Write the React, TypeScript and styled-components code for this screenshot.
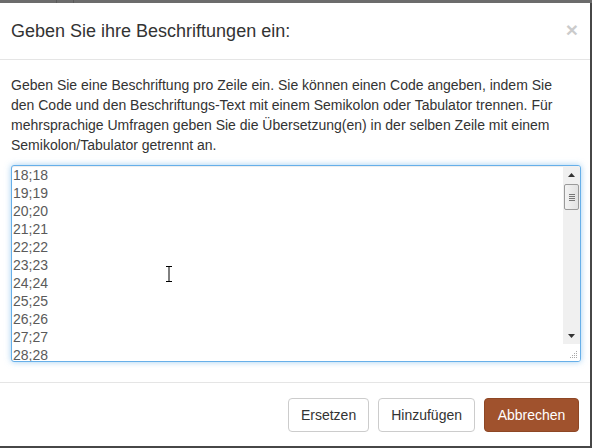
import { useEffect, useRef } from 'react';
import styled, { createGlobalStyle } from 'styled-components';

const GlobalStyle = createGlobalStyle`
  html, body {
    margin: 0;
    padding: 0;
    background: #474747;
  }
  body {
    font-family: 'Liberation Sans', Arial, sans-serif;
    font-size: 14px;
    color: #333;
    overflow: hidden;
  }
  * { box-sizing: border-box; }
`;

const Page = styled.div`
  width: 592px;
  height: 448px;
  display: flex;
  flex-direction: column;
  align-items: flex-start;
`;

const TabStrip = styled.div`
  width: 100%;
  height: 3px;
  display: flex;
  background: #6c6c6c;
  flex-shrink: 0;
`;

const TabSegment = styled.div<{ $w: number }>`
  width: ${(p) => p.$w}px;
  border-right: 1px solid #5a5a5a;
`;

const Modal = styled.div`
  width: 590px;
  height: 443px;
  background: #fff;
  display: flex;
  flex-direction: column;
`;

const Header = styled.div`
  display: flex;
  align-items: center;
  justify-content: space-between;
  padding: 15px 12px 15px 11px;
  border-bottom: 1px solid #e5e5e5;
`;

const Title = styled.h4`
  margin: 0;
  font-size: 18px;
  font-weight: normal;
  line-height: 26px;
  color: #333;
`;

const Close = styled.button`
  border: 0;
  background: transparent;
  padding: 0;
  font-family: 'Liberation Sans', Arial, sans-serif;
  font-size: 21px;
  font-weight: bold;
  line-height: 1;
  color: #000;
  opacity: 0.2;
  margin-top: -4px;
  cursor: pointer;
`;

const Body = styled.div`
  padding: 15px 9px 19px 11px;
`;

const Hint = styled.p`
  margin: 0 0 10px;
  max-width: 566px;
  line-height: 20px;
  color: #333;
`;

const TextBox = styled.div`
  position: relative;
  height: 197px;
  display: flex;
  border: 1px solid #66afe9;
  border-radius: 3px;
  box-shadow: inset 0 1px 1px rgba(0, 0, 0, 0.075), 0 0 6px rgba(102, 175, 233, 0.6);
  background: #fff;
  overflow: hidden;
`;

const Lines = styled.textarea`
  flex: 1;
  border: 0;
  outline: none;
  resize: none;
  overflow: hidden;
  padding: 0 1px;
  margin: 0;
  font-family: 'Liberation Sans', Arial, sans-serif;
  font-size: 14px;
  line-height: 18px;
  color: #5a5a5a;
  background: transparent;
  caret-color: #333;
`;

const ScrollColumn = styled.div`
  width: 17px;
  display: flex;
  flex-direction: column;
  flex-shrink: 0;
`;

const Track = styled.div`
  flex: 1;
  display: flex;
  flex-direction: column;
  align-items: center;
  background: #f0f0f0;
`;

const Arrow = styled.div`
  height: 17px;
  width: 17px;
  display: flex;
  align-items: center;
  justify-content: center;
`;

const Thumb = styled.div`
  width: 15px;
  height: 26px;
  margin-top: 1px;
  border: 1px solid #9a9a9a;
  border-radius: 2px;
  background: linear-gradient(to right, #f3f3f3, #e2e2e2);
  display: flex;
  flex-direction: column;
  align-items: center;
  justify-content: center;
  gap: 1px;
`;

const Grip = styled.span`
  display: block;
  width: 6px;
  height: 1px;
  background: #777;
`;

const Spacer = styled.div`
  flex: 1;
`;

const Corner = styled.div`
  height: 17px;
  background: #fff;
  display: flex;
  align-items: flex-end;
  justify-content: flex-end;
  padding: 0 2px 2px 0;
`;

const Cursor = styled.svg`
  position: absolute;
  left: 153px;
  top: 100px;
  pointer-events: none;
`;

const Footer = styled.div`
  margin-top: auto;
  display: flex;
  justify-content: flex-end;
  gap: 9px;
  padding: 15px 11px 14px;
  border-top: 1px solid #e5e5e5;
`;

const Button = styled.button<{ $primary?: boolean }>`
  height: 34px;
  padding: 6px 12px;
  font-family: 'Liberation Sans', Arial, sans-serif;
  font-size: 14px;
  line-height: 20px;
  border-radius: 4px;
  border: 1px solid ${(p) => (p.$primary ? '#8e4725' : '#ccc')};
  background: ${(p) => (p.$primary ? '#a0522d' : '#fff')};
  color: ${(p) => (p.$primary ? '#fff' : '#333')};
  min-width: ${(p) => (p.$primary ? 95 : 0)}px;
  cursor: pointer;
`;

const entries = Array.from({ length: 60 }, (_, i) => `${i + 1};${i + 1}`).join('\n');

const App = () => {
  const area = useRef<HTMLTextAreaElement>(null);

  useEffect(() => {
    if (area.current) area.current.scrollTop = 17 * 18;
  }, []);

  return (
    <>
      <GlobalStyle />
      <Page>
        <TabStrip>
          <TabSegment $w={57} />
          <TabSegment $w={17} />
        </TabStrip>
        <Modal>
          <Header>
            <Title>Geben Sie ihre Beschriftungen ein:</Title>
            <Close>×</Close>
          </Header>
          <Body>
            <Hint>
              Geben Sie eine Beschriftung pro Zeile ein. Sie können einen Code angeben, indem Sie
              den Code und den Beschriftungs-Text mit einem Semikolon oder Tabulator trennen. Für
              mehrsprachige Umfragen geben Sie die Übersetzung(en) in der selben Zeile mit einem
              Semikolon/Tabulator getrennt an.
            </Hint>
            <TextBox>
              <Lines ref={area} defaultValue={entries} spellCheck={false} />
              <ScrollColumn>
                <Track>
                  <Arrow>
                    <svg width="7" height="4" viewBox="0 0 7 4">
                      <path d="M0 4 L3.5 0 L7 4 Z" fill="#333" />
                    </svg>
                  </Arrow>
                  <Thumb>
                    <Grip />
                    <Grip />
                    <Grip />
                    <Grip />
                  </Thumb>
                  <Spacer />
                  <Arrow>
                    <svg width="7" height="4" viewBox="0 0 7 4">
                      <path d="M0 0 L7 0 L3.5 4 Z" fill="#333" />
                    </svg>
                  </Arrow>
                </Track>
                <Corner>
                  <svg width="8" height="8" viewBox="0 0 8 8">
                    <g fill="#a8a8a8">
                      <rect x="6" y="0" width="1" height="1" />
                      <rect x="4" y="2" width="1" height="1" />
                      <rect x="6" y="2" width="1" height="1" />
                      <rect x="2" y="4" width="1" height="1" />
                      <rect x="4" y="4" width="1" height="1" />
                      <rect x="6" y="4" width="1" height="1" />
                      <rect x="0" y="6" width="1" height="1" />
                      <rect x="2" y="6" width="1" height="1" />
                      <rect x="4" y="6" width="1" height="1" />
                      <rect x="6" y="6" width="1" height="1" />
                    </g>
                  </svg>
                </Corner>
              </ScrollColumn>
              <Cursor width="8" height="16" viewBox="0 0 8 16">
                <path d="M1 0.5 H7 M4 0.5 V15.5 M1 15.5 H7" stroke="#000" strokeWidth="1" fill="none" />
              </Cursor>
            </TextBox>
          </Body>
          <Footer>
            <Button>Ersetzen</Button>
            <Button>Hinzufügen</Button>
            <Button $primary>Abbrechen</Button>
          </Footer>
        </Modal>
      </Page>
    </>
  );
};

export default App;
